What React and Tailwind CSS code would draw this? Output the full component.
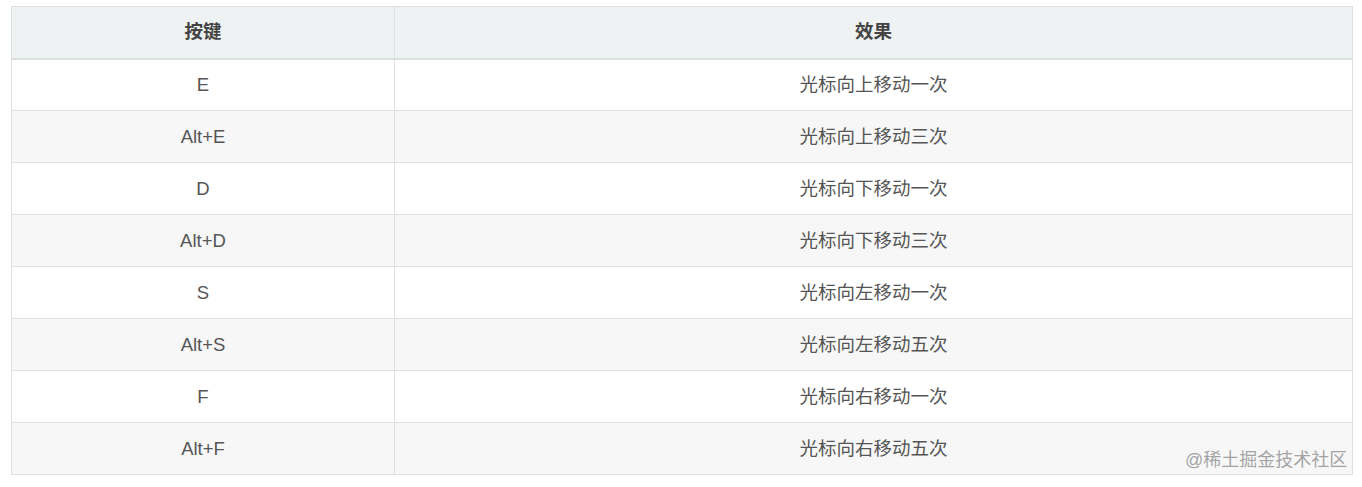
import React from "react";

const ROWS = [
  ["E", "光标向上移动一次"],
  ["Alt+E", "光标向上移动三次"],
  ["D", "光标向下移动一次"],
  ["Alt+D", "光标向下移动三次"],
  ["S", "光标向左移动一次"],
  ["Alt+S", "光标向左移动五次"],
  ["F", "光标向右移动一次"],
  ["Alt+F", "光标向右移动五次"],
];

export default function App() {
  return (
    <div
      className="relative w-[1362px] h-[487px] bg-white pt-[6px] pl-[11px]"
      style={{ fontFamily: '"Liberation Sans", "Noto Sans CJK SC", sans-serif' }}
    >
      <table className="w-[1342px] border-collapse table-fixed text-[18.5px]">
        <thead>
          <tr className="bg-[#eff2f2]">
            <th className="w-[383px] h-[52px] border border-[#dcdfe0] border-b-2 font-bold text-[#444]">按键</th>
            <th className="h-[52px] border border-[#dcdfe0] border-b-2 font-bold text-[#444]">效果</th>
          </tr>
        </thead>
        <tbody>
          {ROWS.map(([key, effect], i) => (
            <tr key={key} className={i % 2 ? "bg-[#f7f7f7]" : "bg-white"}>
              <td className="h-[52px] border border-[#e0e0e0] text-center text-[#555]">{key}</td>
              <td className="h-[52px] border border-[#e0e0e0] text-center text-[#555]">{effect}</td>
            </tr>
          ))}
        </tbody>
      </table>
      <div className="absolute left-[1185px] top-[447px] text-[18px] text-[#a3a3a3] [text-shadow:0_0_1px_#fff]">
        @稀土掘金技术社区
      </div>
    </div>
  );
}
